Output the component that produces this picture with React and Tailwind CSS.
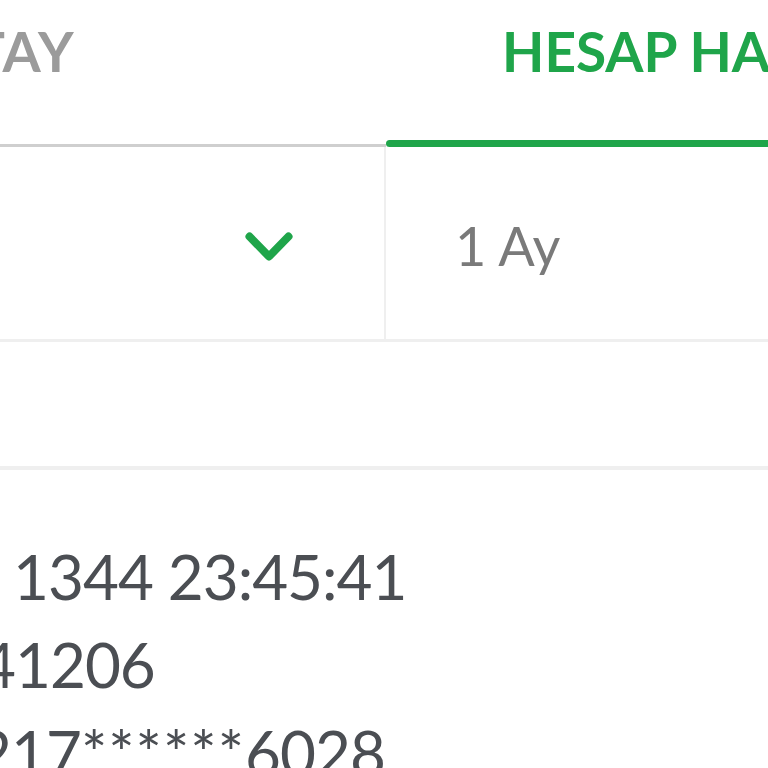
const font = { fontFamily: 'Lato, "Open Sans", sans-serif' }

function Chevron({ className = '' }) {
  return (
    <svg viewBox="0 0 48 30" fill="none" className={className} aria-hidden="true">
      <path
        d="M4.5 4.5l19.5 20L43.5 4.5"
        stroke="currentColor"
        strokeWidth="8"
        strokeLinecap="round"
        strokeLinejoin="round"
      />
    </svg>
  )
}

export default function App() {
  return (
    <div className="w-[768px] h-[768px] overflow-hidden bg-white" style={font}>
      <div className="flex h-[147px]">
        <div className="w-[386px] flex items-start justify-end pr-[311px] pt-[24px] border-b-[3px] border-[#cfcfcf] overflow-hidden">
          <span className="text-[55px] font-bold leading-none tracking-wide text-[#9b9b9b] whitespace-nowrap">DETAY</span>
        </div>
        <div className="flex-1 flex flex-col overflow-hidden">
          <div className="flex-1 pl-[116px] pt-[24px]">
            <span className="text-[55px] font-bold leading-none text-[#1fa54a] whitespace-nowrap">HESAP HAREKETLERİ</span>
          </div>
          <div className="h-[7px] bg-[#1fa54a] rounded-l-full" />
        </div>
      </div>

      <div className="flex h-[195px] border-b-[3px] border-[#efefef]">
        <div className="w-[386px] flex items-center justify-end pr-[91px] pt-[8px] border-r-2 border-[#efefef]">
          <Chevron className="w-[48px] h-[30px] text-[#1fa54a]" />
        </div>
        <div className="flex-1 flex items-center pl-[69px] pt-[6px]">
          <span className="text-[54px] leading-none text-[#7a7a7a]">1 Ay</span>
        </div>
      </div>

      <div className="h-[128px] border-b-4 border-[#efefef]" />

      <div className="flex flex-col pt-[72px] text-[62px] leading-[88px] tracking-[-1px] text-[#4b4e53] whitespace-nowrap">
        <span className="ml-[13px] -mt-[10px]">1344 23:45:41</span>
        <span className="-ml-[20px]">41206</span>
        <span className="-ml-[24px]">
          217<span className="tracking-[1px]">******</span>6028
        </span>
      </div>
    </div>
  )
}
